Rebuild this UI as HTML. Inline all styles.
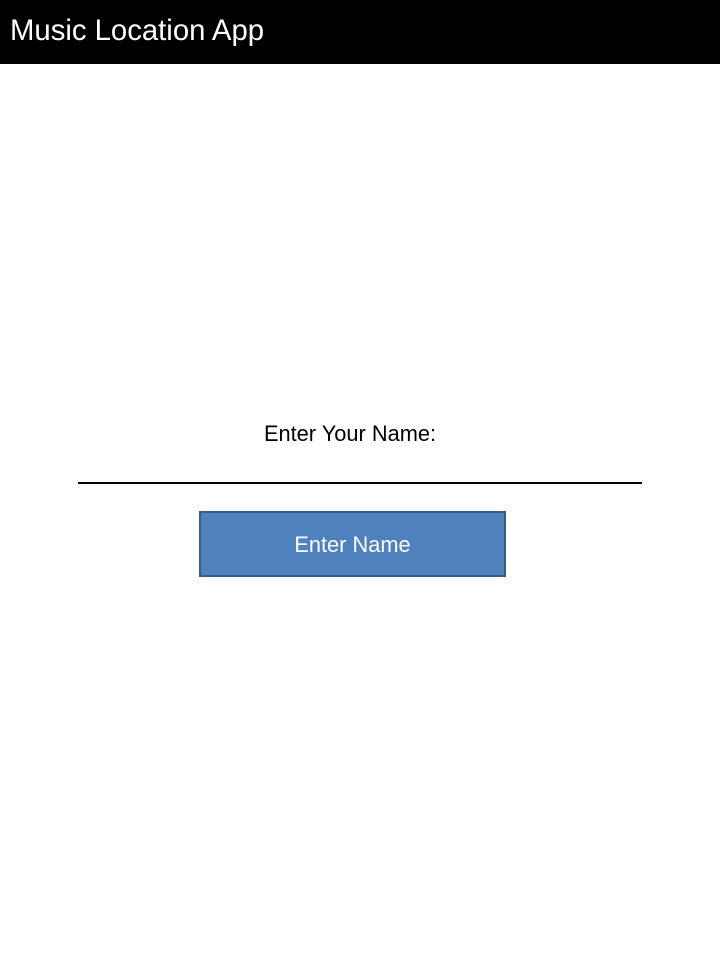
<!DOCTYPE html>
<html><head><style>
body{margin:0;width:720px;height:960px;background:#fff;position:relative;font-family:"Liberation Sans",sans-serif;overflow:hidden}
.bar{position:absolute;left:0;top:0;width:720px;height:64px;background:#000}
.bar span{position:absolute;left:10px;top:14px;color:#fff;font-size:29.3px}
.lbl{position:absolute;left:0;width:700px;text-align:center;top:421px;font-size:21.8px;color:#000}
.line{position:absolute;left:78px;top:482px;width:564px;height:2px;background:#000}
.btn{position:absolute;left:199px;top:511px;width:303px;height:62px;background:#4f81bd;border:2px solid #385d8a;color:#fff;font-size:21.8px;text-align:center;line-height:64px}
</style></head><body>
<div class="bar"><span>Music Location App</span></div>
<div class="lbl">Enter Your Name:</div>
<div class="line"></div>
<div class="btn">Enter Name</div>
</body></html>
